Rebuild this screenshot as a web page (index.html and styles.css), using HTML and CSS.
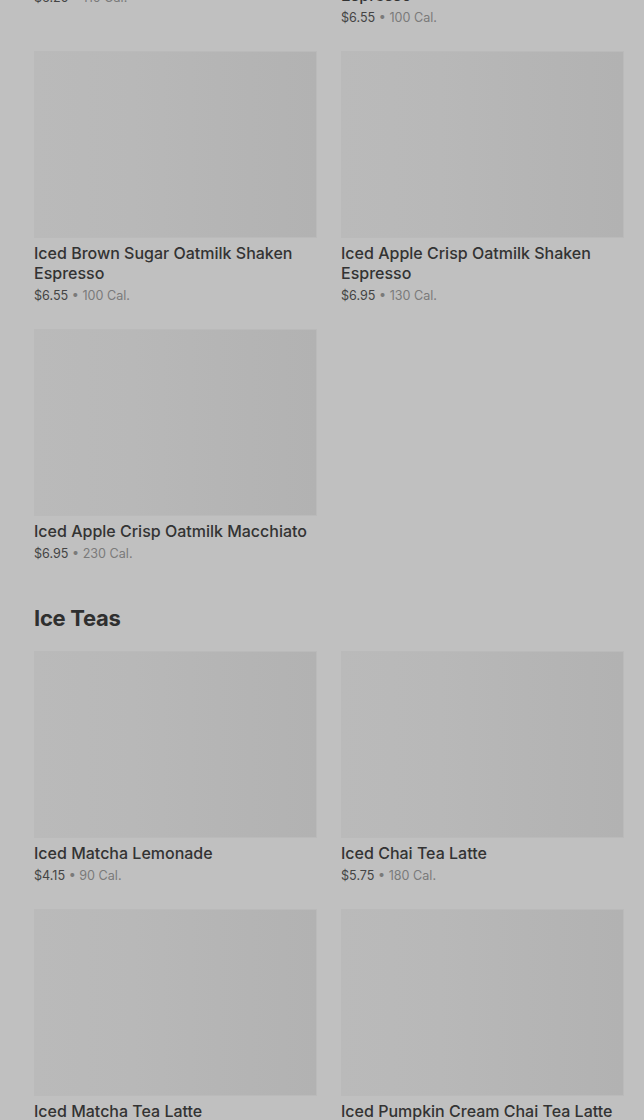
FILE: index.html
```html
<!DOCTYPE html>
<html>
<head>
<meta charset="utf-8">
<link rel="stylesheet" href="styles.css">
</head>
<body>
<main class="menu">
  <section class="section section-first">
    <div class="grid">
      <div class="card">
        <div class="thumb"></div>
        <div class="title">Iced Shaken Espresso</div>
        <div class="meta"><span class="price">$6.25</span> • 110 Cal.</div>
      </div>
      <div class="card">
        <div class="thumb"></div>
        <div class="title">Iced Toasted Vanilla Oatmilk Shaken Espresso</div>
        <div class="meta"><span class="price">$6.55</span> • 100 Cal.</div>
      </div>
      <div class="card">
        <div class="thumb"></div>
        <div class="title">Iced Brown Sugar Oatmilk Shaken Espresso</div>
        <div class="meta"><span class="price">$6.55</span> • 100 Cal.</div>
      </div>
      <div class="card">
        <div class="thumb"></div>
        <div class="title">Iced Apple Crisp Oatmilk Shaken Espresso</div>
        <div class="meta"><span class="price">$6.95</span> • 130 Cal.</div>
      </div>
      <div class="card">
        <div class="thumb"></div>
        <div class="title">Iced Apple Crisp Oatmilk Macchiato</div>
        <div class="meta"><span class="price">$6.95</span> • 230 Cal.</div>
      </div>
    </div>
  </section>
  <section class="section">
    <h2 class="section-title">Ice Teas</h2>
    <div class="grid">
      <div class="card">
        <div class="thumb"></div>
        <div class="title">Iced Matcha Lemonade</div>
        <div class="meta"><span class="price">$4.15</span> • 90 Cal.</div>
      </div>
      <div class="card">
        <div class="thumb"></div>
        <div class="title">Iced Chai Tea Latte</div>
        <div class="meta"><span class="price">$5.75</span> • 180 Cal.</div>
      </div>
      <div class="card">
        <div class="thumb"></div>
        <div class="title">Iced Matcha Tea Latte</div>
        <div class="meta"><span class="price">$5.45</span> • 200 Cal.</div>
      </div>
      <div class="card">
        <div class="thumb"></div>
        <div class="title">Iced Pumpkin Cream Chai Tea Latte</div>
        <div class="meta"><span class="price">$6.45</span> • 310 Cal.</div>
      </div>
    </div>
  </section>
</main>
</body>
</html>
```

FILE: styles.css
```css
html, body {
  margin: 0;
  padding: 0;
  background: #c0c0c0;
  overflow: hidden;
}
body {
  font-family: Inter, "Noto Sans", sans-serif;
  color: #303030;
}
.menu {
  padding: 0 20px 0 34px;
  margin-top: -227px;
}
.section-title {
  margin: 41px 0 19px;
  font-size: 22px;
  line-height: 28px;
  height: 28px;
  font-weight: 700;
  letter-spacing: -0.3px;
  color: #2f2f2f;
}
.grid {
  display: grid;
  grid-template-columns: 283px 283px;
  column-gap: 24px;
  row-gap: 24px;
}
.card {
  display: flex;
  flex-direction: column;
}
.thumb {
  height: 187px;
  flex: none;
  box-sizing: border-box;
  border: 1px solid #bababa;
  background: linear-gradient(90deg, #bababa 0%, #b8b8b8 35%, #b5b5b5 65%, #b2b2b2 100%);
}
.title {
  margin-top: 5px;
  font-size: 16px;
  line-height: 20px;
  font-weight: 500;
  color: #333;
}
.meta {
  margin-top: 4px;
  font-size: 12.6px;
  line-height: 18px;
  height: 18px;
  color: #7a7a7a;
}
.price {
  color: #444;
}
```
